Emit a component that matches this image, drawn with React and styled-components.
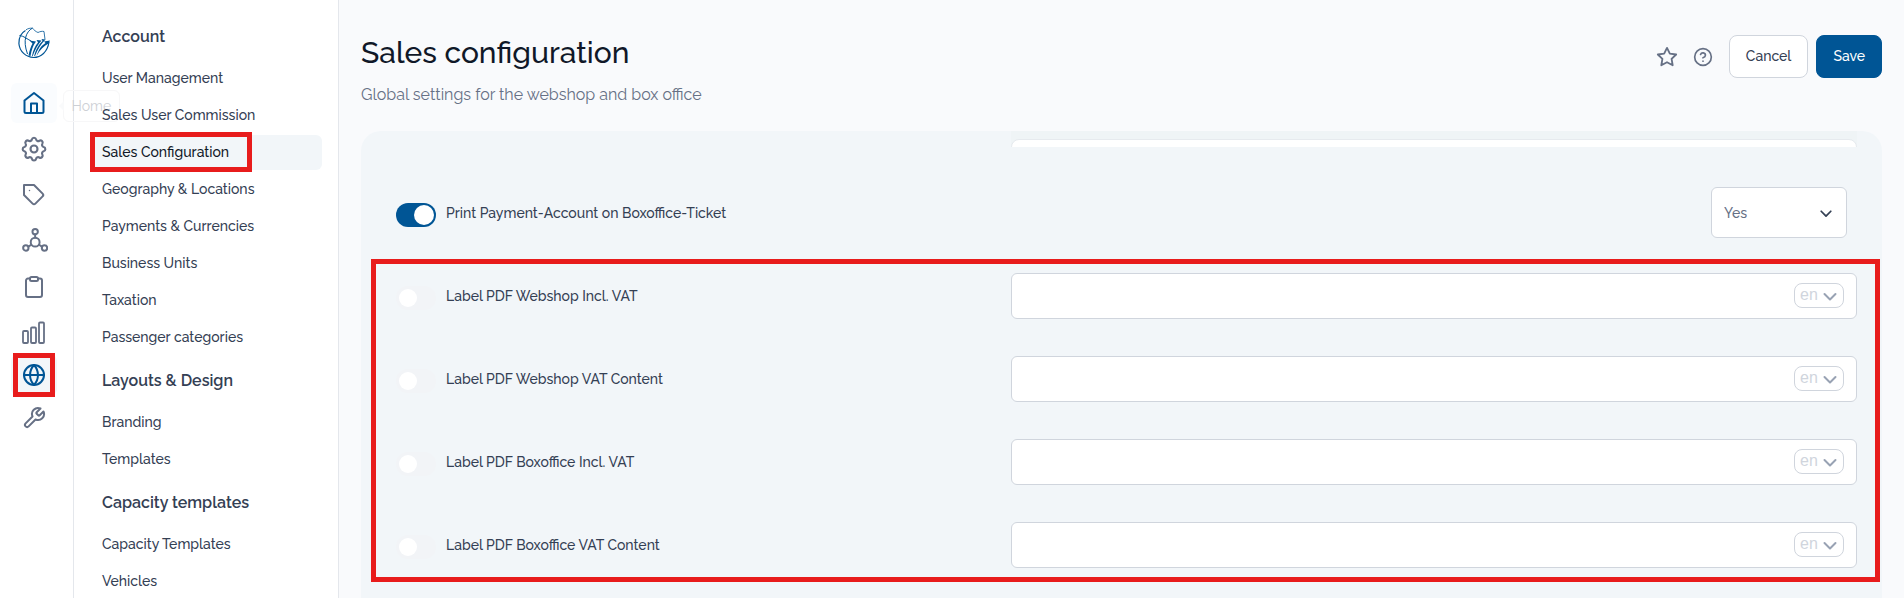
import React, { useState } from "react";
import styled, { createGlobalStyle } from "styled-components";

const GlobalStyle = createGlobalStyle`
  * {
    box-sizing: border-box;
  }

  body {
    margin: 0;
    background: #f9fafc;
    color: #344054;
    font-family: Raleway, Lato, "Open Sans", sans-serif;
    font-size: 14px;
    font-weight: 500;
    line-height: 20px;
  }

  button, input, select {
    font: inherit;
    color: inherit;
  }
`;

const Page = styled.div`
  display: flex;
  height: 100vh;
  overflow: hidden;
`;

const Rail = styled.nav`
  display: flex;
  flex-direction: column;
  align-items: center;
  flex: none;
  width: 74px;
  padding: 27px 6px 0 0;
  background: #fff;
  border-right: 1px solid #e4e7ec;
`;

const Logo = styled.a`
  display: flex;
  margin-bottom: 24px;
`;

const RailGroup = styled.div`
  display: flex;
  flex-direction: column;
  gap: ${(props) => (props.$tight ? "3px" : "6px")};
  margin-bottom: 2px;
`;

const RailLink = styled.a`
  position: relative;
  display: flex;
  align-items: center;
  justify-content: center;
  width: 46px;
  height: 40px;
  border-radius: 6px;
  color: ${(props) => (props.$active ? "#005595" : "#667085")};
  background: ${(props) => props.$bg || "transparent"};
`;

const Tooltip = styled.span`
  position: absolute;
  left: 52px;
  top: 7px;
  padding: 4px 8px;
  border: 1px solid #f7f7f8;
  border-radius: 6px;
  font-weight: 400;
  line-height: 22px;
  color: #cdd0d5;

  &::before {
    content: "";
    position: absolute;
    left: -5px;
    top: 10px;
    border: 5px solid transparent;
    border-left-width: 0;
    border-right-color: #f9fafb;
  }
`;

const Marker = styled.span`
  position: absolute;
  border: 5px solid #e81c1c;
  pointer-events: none;
`;

const RailMarker = styled(Marker)`
  inset: -2px 2px;
`;

const MenuMarker = styled(Marker)`
  inset: -3px auto -2px -2px;
  width: 162px;
`;

const GroupMarker = styled(Marker)`
  inset: 5px 2px 4px 10px;
`;

const Menu = styled.nav`
  display: flex;
  flex-direction: column;
  gap: 14px;
  flex: none;
  width: 265px;
  padding: 25px 16px 0 18px;
  overflow: hidden;
  background: #fff;
  border-right: 1px solid #e4e7ec;
`;

const MenuGroup = styled.section`
  display: flex;
  flex-direction: column;
  gap: 2px;
`;

const MenuTitle = styled.h2`
  margin: 0 0 10px;
  padding-left: 10px;
  font-size: 16px;
  font-weight: 600;
  line-height: 24px;
`;

const MenuLink = styled.a`
  position: relative;
  flex: none;
  height: 35px;
  padding-left: 10px;
  border-radius: 6px;
  line-height: 35px;
  text-decoration: none;
  color: ${(props) => (props.$active ? "#101828" : "#344054")};
  background: ${(props) => (props.$active ? "#f2f6f9" : "transparent")};
`;

const Main = styled.main`
  display: flex;
  flex-direction: column;
  flex: 1;
  min-width: 0;
  padding: 33px 22px 0;
`;

const Header = styled.header`
  display: flex;
  justify-content: space-between;
  align-items: flex-start;
  height: 98px;
`;

const Title = styled.h1`
  margin: 0 0 10px;
  font-size: 30px;
  font-weight: 500;
  line-height: 40px;
  color: #101828;
`;

const Subtitle = styled.p`
  margin: 0;
  font-size: 16px;
  font-weight: 400;
  line-height: 24px;
  color: #667085;
`;

const Actions = styled.div`
  display: flex;
  align-items: center;
  gap: 8px;
  padding-top: 2px;
`;

const IconButton = styled.button`
  display: flex;
  align-items: center;
  justify-content: center;
  width: 28px;
  height: 28px;
  padding: 0;
  border: 0;
  background: none;
  color: #667085;
`;

const IconActions = styled.div`
  display: flex;
  gap: 8px;
  padding-right: 4px;
`;

const Button = styled.button`
  height: 43px;
  padding: 0 16px 1px;
  border: 1px solid ${(props) => (props.$primary ? "#005595" : "#d0d5dd")};
  border-radius: 8px;
  color: ${(props) => (props.$primary ? "#fff" : "#344054")};
  background: ${(props) => (props.$primary ? "#005595" : "#fff")};
`;

const Panel = styled.form`
  flex: 1;
  border-radius: 20px 20px 0 0;
  background: #f2f6f9;
`;

const Row = styled.div`
  display: grid;
  grid-template-columns: 8fr 11fr;
  align-items: center;
  height: 83px;
  padding: 0 25px 0 35px;
`;

const ClippedRow = styled(Row)`
  height: 16px;
  margin-bottom: 24px;
`;

const ClippedField = styled.div`
  grid-column: 2;
  height: 16px;
  padding-top: 8px;
  overflow: hidden;
  background: #eff4f6;
`;

const ClippedInput = styled.input`
  display: block;
  width: 100%;
  height: 46px;
  border: 1px solid #e6eaee;
  border-radius: 8px;
  background: #fff;
`;

const RowGroup = styled.div`
  position: relative;
`;

const RowLabel = styled.label`
  display: flex;
  align-items: center;
  gap: 10px;
`;

const Switch = styled.input`
  appearance: none;
  flex: none;
  display: flex;
  align-items: center;
  width: 40px;
  height: 24px;
  margin: 4px 0 0;
  padding: 0 3px;
  border-radius: 12px;
  background: #f2f4f7;

  &::before {
    content: "";
    width: 18px;
    height: 18px;
    border-radius: 50%;
    background: #fff;
  }

  &:checked {
    justify-content: flex-end;
    padding: 0 2px;
    background: #005595;
  }

  &:checked::before {
    width: 20px;
    height: 20px;
  }
`;

const Field = styled.div`
  display: flex;
  align-items: center;
  height: 46px;
  padding-right: 12px;
  border: 1px solid #d0d5dd;
  border-radius: 6px;
  background: #fff;
`;

const FieldInput = styled.input`
  flex: 1;
  min-width: 0;
  height: 100%;
  padding: 0 12px;
  border: 0;
  border-radius: 6px;
  outline: 0;
  background: none;
`;

const SelectBox = styled.div`
  display: grid;
  align-items: center;
  justify-self: end;

  select,
  svg {
    grid-area: 1 / 1;
  }

  svg {
    justify-self: end;
    margin-right: ${(props) => (props.$small ? "6px" : "14px")};
    pointer-events: none;
  }
`;

const AnswerSelect = styled.select`
  appearance: none;
  width: 136px;
  height: 51px;
  padding: 0 12px;
  border: 1px solid #d0d5dd;
  border-radius: 6px;
  color: #667085;
  background: #fff;
`;

const AnswerCell = styled.div`
  display: grid;
  padding-right: 10px;
`;

const LangSelect = styled.select`
  appearance: none;
  width: 50px;
  height: 25px;
  padding: 0 5px 2px;
  border: 1px solid #d0d5dd;
  border-radius: 8px;
  font-family: "Liberation Sans", sans-serif;
  font-size: 16px;
  font-weight: 400;
  color: #d0d5dd;
  background: #fff;
`;

const Icon = ({ size = 24, width = 2, children }) => (
  <svg
    width={size}
    height={size}
    viewBox="0 0 24 24"
    fill="none"
    stroke="currentColor"
    strokeWidth={width}
    strokeLinecap="round"
    strokeLinejoin="round"
    aria-hidden="true"
  >
    {children}
  </svg>
);

const LogoMark = () => (
  <svg width="32" height="32" viewBox="0 0 32 32" fill="none" stroke="#005595" aria-hidden="true">
    <path d="M7.500 3.500C3 6 .8 10.500.9 16.500 1.500 24.500 8 30.300 15.500 30.500 23 30.500 29.500 25 31 15" strokeWidth="1.200" />
    <path d="M8 2.800C10 1.500 12 1 14.500 1.200 16 3 17.500 4.500 20 5.500 22 4.500 24 4 26 4.500L27 12.500" strokeWidth=".8" />
    <path d="M14.500 1C8 5 4.500 13 9.500 27M1.500 8.500C6 9 9 12 13 14" strokeWidth="1" />
    <path d="M11.500 13.500L18 14.500C15 18.500 13.500 23 12.500 29L10.500 28.500C11.500 23 13 19 14.500 16.500Z" fill="#005595" stroke="none" />
    <path d="M18.500 13L23.500 13.500C19.500 18 17 23 14.500 29.500L14 29C15 23.500 17 19 20 15.500Z" fill="#005595" stroke="none" />
    <path d="M23.500 12L27.500 12.500C23 17 20 22 17 29L16.200 29C18 22 20.500 18 24.500 14Z" fill="#005595" stroke="none" />
    <path d="M26 14.500L32 13.500 30.500 16.500C25.500 19 22 23 18.500 29C21 22 23 19 27.500 16Z" fill="#005595" stroke="none" />
  </svg>
);

const HomeIcon = () => (
  <Icon>
    <path d="M2.500 9.500L12 2l9.500 7.500V20.500a1.500 1.500 0 0 1-1.500 1.500h-16A1.500 1.500 0 0 1 2.500 20.500z" />
    <path d="M9 22v-9.500h6V22" />
  </Icon>
);

const GearIcon = () => (
  <Icon size={30} width={1.7}>
    <circle cx="12" cy="12" r="2.800" />
    <path d="M10.300 4.300c.4-1.800 3-1.800 3.400 0a1.700 1.700 0 0 0 2.600 1.100c1.500-.9 3.300.8 2.400 2.400a1.700 1.700 0 0 0 1 2.600c1.800.4 1.800 3 0 3.400a1.700 1.700 0 0 0-1 2.600c.9 1.500-.9 3.300-2.400 2.400a1.700 1.700 0 0 0-2.600 1c-.4 1.800-3 1.800-3.400 0a1.700 1.700 0 0 0-2.600-1c-1.500.9-3.300-.9-2.400-2.400a1.700 1.700 0 0 0-1-2.600c-1.800-.4-1.800-3 0-3.400a1.700 1.700 0 0 0 1-2.600c-.9-1.500.9-3.300 2.400-2.400 1 .6 2.300.1 2.600-1.100z" />
  </Icon>
);

const TagIcon = () => (
  <Icon>
    <path d="M20.600 13.400l-7.200 7.200a2 2 0 0 1-2.800 0L2 12V2h10l8.600 8.600a2 2 0 0 1 0 2.800z" />
    <path d="M7.500 7.500h.01" strokeWidth="1.500" />
  </Icon>
);

const NetworkIcon = () => (
  <Icon size={28} width={1.7}>
    <circle cx="13" cy="13" r="3.800" />
    <circle cx="13" cy="4" r="2.300" />
    <circle cx="5" cy="18" r="2.300" />
    <circle cx="21" cy="18" r="2.300" />
    <path d="M13 6.500v2.500M7.200 16.800l2.400-1.600M18.800 16.800l-2.400-1.600" />
  </Icon>
);

const ClipboardIcon = () => (
  <Icon>
    <path d="M16 3.500h2a2 2 0 0 1 2 2V20a2 2 0 0 1-2 2H6a2 2 0 0 1-2-2V5.500a2 2 0 0 1 2-2h2" />
    <rect x="8" y="2" width="8" height="4" rx="1.500" />
  </Icon>
);

const ChartIcon = () => (
  <Icon width={1.800}>
    <rect x="1" y="10" width="5" height="12" rx="1" />
    <rect x="9" y="6.500" width="5" height="15.500" rx="1" />
    <rect x="17" y="1.500" width="5" height="20.500" rx="1" />
  </Icon>
);

const GlobeIcon = () => (
  <Icon>
    <circle cx="12" cy="12" r="10" />
    <path d="M2 12h20M12 2a15.300 15.300 0 0 1 4 10 15.300 15.300 0 0 1-4 10 15.300 15.300 0 0 1-4-10 15.300 15.300 0 0 1 4-10z" />
  </Icon>
);

const WrenchIcon = () => (
  <Icon>
    <path d="M14.700 6.300a1 1 0 0 0 0 1.400l1.600 1.600a1 1 0 0 0 1.400 0l3.770-3.770a6 6 0 0 1-7.940 7.940l-6.910 6.910a2.120 2.120 0 0 1-3-3l6.910-6.910a6 6 0 0 1 7.940-7.940l-3.760 3.760z" />
  </Icon>
);

const StarIcon = () => (
  <Icon size={22}>
    <path d="M12 2l3.090 6.260L22 9.270l-5 4.870 1.180 6.880L12 17.770l-6.180 3.250L7 14.140 2 9.270l6.910-1.010z" />
  </Icon>
);

const HelpIcon = () => (
  <Icon size={20}>
    <circle cx="12" cy="12" r="10" />
    <path d="M9.090 9a3 3 0 0 1 5.830 1c0 2-3 3-3 3M12 17h.01" />
  </Icon>
);

const Chevron = ({ size, color }) => (
  <svg
    width={size}
    height={size}
    viewBox="0 0 16 16"
    fill="none"
    stroke={color}
    strokeWidth="2"
    strokeLinecap="round"
    strokeLinejoin="round"
    aria-hidden="true"
  >
    <path d="M2.500 6L8 11.500 13.500 6" />
  </svg>
);

const mainLinks = [
  { name: "Home", icon: <HomeIcon />, active: true, bg: "#fafcfe", tooltip: true },
  { name: "Settings", icon: <GearIcon /> },
  { name: "Products", icon: <TagIcon /> },
  { name: "Network", icon: <NetworkIcon /> },
  { name: "Orders", icon: <ClipboardIcon /> },
  { name: "Reports", icon: <ChartIcon /> },
];

const adminLinks = [
  { name: "Global", icon: <GlobeIcon />, active: true, bg: "#f2f6f9", marked: true },
  { name: "Tools", icon: <WrenchIcon /> },
];

const menu = [
  {
    title: "Account",
    items: [
      "User Management",
      "Sales User Commission",
      "Sales Configuration",
      "Geography & Locations",
      "Payments & Currencies",
      "Business Units",
      "Taxation",
      "Passenger categories",
    ],
  },
  { title: "Layouts & Design", items: ["Branding", "Templates"] },
  { title: "Capacity templates", items: ["Capacity Templates", "Vehicles"] },
];

const labels = [
  "Label PDF Webshop Incl. VAT",
  "Label PDF Webshop VAT Content",
  "Label PDF Boxoffice Incl. VAT",
  "Label PDF Boxoffice VAT Content",
];

const RailLinks = ({ links, tight }) => (
  <RailGroup $tight={tight}>
    {links.map((link) => (
      <RailLink key={link.name} href="#" aria-label={link.name} $active={link.active} $bg={link.bg}>
        {link.icon}
        {link.tooltip && <Tooltip>{link.name}</Tooltip>}
        {link.marked && <RailMarker />}
      </RailLink>
    ))}
  </RailGroup>
);

const LabelRow = ({ label }) => {
  const [enabled, setEnabled] = useState(false);
  const [text, setText] = useState("");

  return (
    <Row>
      <RowLabel>
        <Switch type="checkbox" checked={enabled} onChange={(e) => setEnabled(e.target.checked)} />
        {label}
      </RowLabel>
      <Field>
        <FieldInput aria-label={label} value={text} onChange={(e) => setText(e.target.value)} />
        <SelectBox $small>
          <LangSelect aria-label="Language" defaultValue="en">
            <option>en</option>
            <option>de</option>
          </LangSelect>
          <Chevron size={16} color="#98a2b3" />
        </SelectBox>
      </Field>
    </Row>
  );
};

const App = () => {
  const [printAccount, setPrintAccount] = useState(true);

  return (
    <>
      <GlobalStyle />
      <Page>
        <Rail>
          <Logo href="#" aria-label="Start">
            <LogoMark />
          </Logo>
          <RailLinks links={mainLinks} />
          <RailLinks links={adminLinks} tight />
        </Rail>

        <Menu>
          {menu.map((group) => (
            <MenuGroup key={group.title}>
              <MenuTitle>{group.title}</MenuTitle>
              {group.items.map((item) => (
                <MenuLink key={item} href="#" $active={item === "Sales Configuration"}>
                  {item}
                  {item === "Sales Configuration" && <MenuMarker />}
                </MenuLink>
              ))}
            </MenuGroup>
          ))}
        </Menu>

        <Main>
          <Header>
            <div>
              <Title>Sales configuration</Title>
              <Subtitle>Global settings for the webshop and box office</Subtitle>
            </div>
            <Actions>
              <IconActions>
                <IconButton aria-label="Favourite">
                  <StarIcon />
                </IconButton>
                <IconButton aria-label="Help">
                  <HelpIcon />
                </IconButton>
              </IconActions>
              <Button>Cancel</Button>
              <Button $primary>Save</Button>
            </Actions>
          </Header>

          <Panel>
            <ClippedRow>
              <ClippedField>
                <ClippedInput aria-label="Footer text" />
              </ClippedField>
            </ClippedRow>
            <Row>
              <RowLabel>
                <Switch
                  type="checkbox"
                  checked={printAccount}
                  onChange={(e) => setPrintAccount(e.target.checked)}
                />
                Print Payment-Account on Boxoffice-Ticket
              </RowLabel>
              <AnswerCell>
                <SelectBox>
                  <AnswerSelect aria-label="Print payment account" defaultValue="Yes">
                    <option>Yes</option>
                    <option>No</option>
                  </AnswerSelect>
                  <Chevron size={14} color="#344054" />
                </SelectBox>
              </AnswerCell>
            </Row>
            <RowGroup>
              {labels.map((label) => (
                <LabelRow key={label} label={label} />
              ))}
              <GroupMarker />
            </RowGroup>
          </Panel>
        </Main>
      </Page>
    </>
  );
};

export default App;
